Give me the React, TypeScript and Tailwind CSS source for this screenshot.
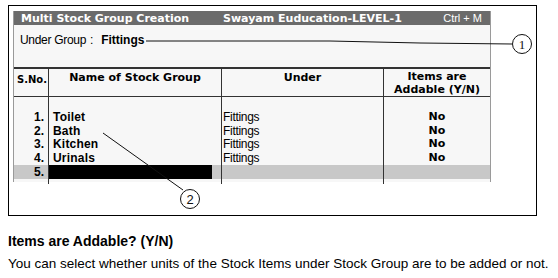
import React from "react";

const rows = [
  { no: "1.", name: "Toilet", under: "Fittings", addable: "No" },
  { no: "2.", name: "Bath", under: "Fittings", addable: "No" },
  { no: "3.", name: "Kitchen", under: "Fittings", addable: "No" },
  { no: "4.", name: "Urinals", under: "Fittings", addable: "No" },
];

const verdana = "font-['DejaVu_Sans',Verdana,sans-serif]";
const arial = "font-['Liberation_Sans',Arial,sans-serif]";

function Callouts() {
  return (
    <svg className="pointer-events-none absolute left-0 top-0" width="558" height="278">
      <path d="M146 41 L330 41 L420 43 L512 44" fill="none" stroke="#111" strokeWidth="1" />
      <circle cx="522" cy="44" r="9.5" fill="white" stroke="#111" strokeWidth="1" />
      <text x="522" y="49" textAnchor="middle" fontSize="13" fontFamily="'Liberation Serif', serif" fill="#111">1</text>
      <line x1="103" y1="133" x2="183" y2="190" stroke="#111" strokeWidth="1" />
      <circle cx="190" cy="199" r="9.5" fill="white" stroke="#111" strokeWidth="1" />
      <text x="190" y="204" textAnchor="middle" fontSize="13" fontFamily="'Liberation Sans', sans-serif" fill="#111">2</text>
    </svg>
  );
}

export default function App() {
  return (
    <div className={`relative w-[558px] h-[278px] bg-white text-black ${arial}`}>
      <div className="ml-[8px] pt-[5px]">
        <div className="w-[529px] h-[211px] border border-black pl-[4px] pt-[5px]">
          <div className="w-[478px] h-[171px] bg-[#f7f7f7] border-l border-r border-[#9a9a9a] border-t-0">
            {/* title bar */}
            <div className="flex h-[14px] items-center bg-[#6b6b6b] text-white text-[11px] leading-none">
              <span className={`pl-[7px] w-[209px] font-bold ${verdana}`}>Multi Stock Group Creation</span>
              <span className={`font-bold ${verdana}`}>Swayam Euducation-LEVEL-1</span>
              <span className="ml-auto pr-[8px] text-[11px]">Ctrl + M</span>
            </div>
            {/* under group */}
            <div className="flex h-[42px] items-start pl-[6px] pt-[8px] text-[12px] leading-[14px] tracking-[-0.3px]">
              <span>Under Group</span>
              <span className="ml-[4px]">:</span>
              <span className="ml-[8px] font-bold tracking-normal">Fittings</span>
            </div>
            {/* table */}
            <div className="grid grid-cols-[35px_173px_162px_1fr] border-t-2 border-[#333]">
              <div className={`h-[28px] border-r border-[#333] border-b pl-[3px] pt-[3px] text-[10px] font-bold ${verdana}`}>S.No.</div>
              <div className={`h-[28px] border-r border-[#333] border-b pt-[1px] text-center text-[11px] font-bold ${verdana}`}>Name of Stock Group</div>
              <div className={`h-[28px] border-r border-[#333] border-b pt-[1px] text-center text-[11px] font-bold ${verdana}`}>Under</div>
              <div className={`h-[28px] border-b border-[#333] pt-[1px] text-center text-[11px] font-bold leading-[13px] ${verdana}`}>
                Items are
                <br />
                Addable (Y/N)
              </div>

              <div className="h-[13px] border-r border-[#333]" />
              <div className="h-[13px] border-r border-[#333]" />
              <div className="h-[13px] border-r border-[#333]" />
              <div className="h-[13px]" />

              {rows.map((r) => (
                <React.Fragment key={r.no}>
                  <div className="h-[13.7px] border-r border-[#333] pr-[4px] text-right text-[12px] font-bold leading-[14px]">{r.no}</div>
                  <div className="h-[13.7px] border-r border-[#333] pl-[4px] text-[12px] font-bold leading-[14px] tracking-[0.2px]">{r.name}</div>
                  <div className="h-[13.7px] border-r border-[#333] pl-[1px] text-[12px] leading-[14px] tracking-[-0.3px]">{r.under}</div>
                  <div className={`h-[13.7px] text-center text-[11px] font-bold leading-[14px] ${verdana}`}>{r.addable}</div>
                </React.Fragment>
              ))}

              <div className="h-[14px] bg-[#c8c8c8] border-r border-[#333] pr-[4px] text-right text-[12px] font-bold leading-[14px]">5.</div>
              <div className="h-[14px] bg-[#c8c8c8] border-r border-[#333] flex">
                <div className="w-[163px] h-full bg-black" />
              </div>
              <div className="h-[14px] bg-[#c8c8c8] border-r border-[#333]" />
              <div className="h-[14px] bg-[#c8c8c8]" />

              <div className="h-[5px] border-r border-[#333]" />
              <div className="h-[5px] border-r border-[#333]" />
              <div className="h-[5px] border-r border-[#333]" />
              <div className="h-[5px]" />
            </div>
          </div>
        </div>
        <div className="mt-[17px] text-[14px] font-bold leading-[17px]">Items are Addable? (Y/N)</div>
        <div className="mt-[6px] text-[13.5px] leading-[16px]">
          You can select whether units of the Stock Items under Stock Group are to be added or not.
        </div>
      </div>
      <Callouts />
    </div>
  );
}
